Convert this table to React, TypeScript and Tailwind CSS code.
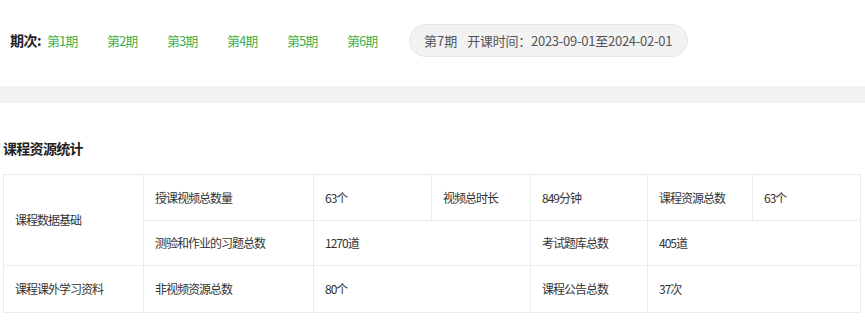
import React from "react";

const periods = ["第1期", "第2期", "第3期", "第4期", "第5期", "第6期"];

const cell = "border border-[#ebebeb] px-[11px] text-left font-normal align-middle";

export default function App() {
  return (
    <div className="w-[865px] h-[323px] bg-white text-[#333] font-['Microsoft_YaHei','Noto_Sans_CJK_SC',sans-serif] overflow-hidden">
      {/* 期次切换 */}
      <div className="h-[86px] flex items-center pl-[10px] pb-[5px]">
        <span className="text-[14px] font-bold text-[#222] w-[37px] tracking-[-0.5px]">期次:</span>
        {periods.map((p) => (
          <a key={p} className="w-[60px] text-[13px] tracking-[-1px] text-[#45b04a] cursor-pointer">
            {p}
          </a>
        ))}
        <div className="ml-[2px] h-[33px] flex items-center rounded-full bg-[#f2f2f2] border border-[#e6e6e6] pl-[14px] pr-[15px] text-[13px] text-[#555]">
          <span>第7期</span>
          <span className="ml-[10px] tracking-[-0.25px]">开课时间：2023-09-01至2024-02-01</span>
        </div>
      </div>

      <div className="h-[17px] bg-[#f2f2f2]" />

      {/* 课程资源统计 */}
      <div className="px-[3px]">
        <h2 className="mt-[35px] text-[14px] tracking-[-0.7px] font-bold text-[#222] leading-[20px]">课程资源统计</h2>
        <table className="mt-[16px] w-[857px] border-collapse table-fixed text-[12px] tracking-[-1px] text-[#333]">
          <colgroup>
            <col className="w-[140px]" />
            <col className="w-[170px]" />
            <col className="w-[118px]" />
            <col className="w-[99px]" />
            <col className="w-[117px]" />
            <col className="w-[105px]" />
            <col className="w-[108px]" />
          </colgroup>
          <tbody>
            <tr className="h-[46px]">
              <td rowSpan={2} className={cell}>课程数据基础</td>
              <td className={cell}>授课视频总数量</td>
              <td className={cell}>63个</td>
              <td className={cell}>视频总时长</td>
              <td className={cell}>849分钟</td>
              <td className={cell}>课程资源总数</td>
              <td className={cell}>63个</td>
            </tr>
            <tr className="h-[45px]">
              <td className={cell}>测验和作业的习题总数</td>
              <td colSpan={2} className={cell}>1270道</td>
              <td className={cell}>考试题库总数</td>
              <td colSpan={2} className={cell}>405道</td>
            </tr>
            <tr className="h-[47px]">
              <td className={cell}>课程课外学习资料</td>
              <td className={cell}>非视频资源总数</td>
              <td colSpan={2} className={cell}>80个</td>
              <td className={cell}>课程公告总数</td>
              <td colSpan={2} className={cell}>37次</td>
            </tr>
          </tbody>
        </table>
      </div>
    </div>
  );
}
